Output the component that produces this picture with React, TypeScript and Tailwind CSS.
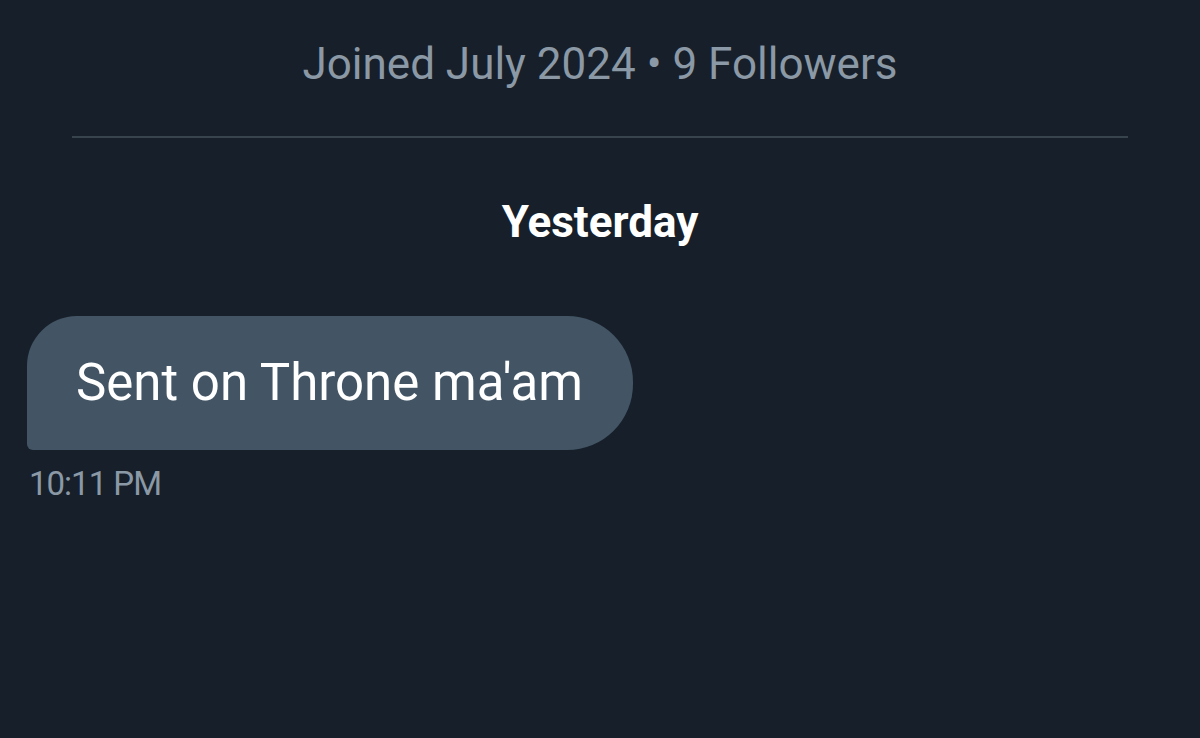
import React from "react";

export default function App() {
  return (
    <div
      className="w-[1200px] h-[738px] bg-[#17202a] overflow-hidden flex flex-col"
      style={{ fontFamily: "Roboto, 'Liberation Sans', sans-serif" }}
    >
      <div className="h-[136px] flex justify-center items-start pt-[36px]">
        <span className="text-[44px] leading-[56px] text-[#8b98a5]">
          Joined July 2024 • 9 Followers
        </span>
      </div>
      <div className="mx-[72px] h-[2px] bg-[#38444d]" />
      <div className="h-[178px] flex justify-center items-start pt-[58px]">
        <span className="text-[44px] leading-[52px] font-bold text-white">Yesterday</span>
      </div>
      <div className="pl-[27px]">
        <div className="w-[606px] h-[134px] bg-[#435565] rounded-tl-[50px] rounded-tr-[66px] rounded-br-[66px] rounded-bl-[6px] flex items-center pl-[49px]">
          <span className="text-[51px] leading-[60px] text-white">Sent on Throne ma'am</span>
        </div>
        <div className="mt-[14px] pl-[2px] text-[33px] leading-[40px] text-[#8b98a5] tracking-[-1px]">
          10:11 PM
        </div>
      </div>
    </div>
  );
}
